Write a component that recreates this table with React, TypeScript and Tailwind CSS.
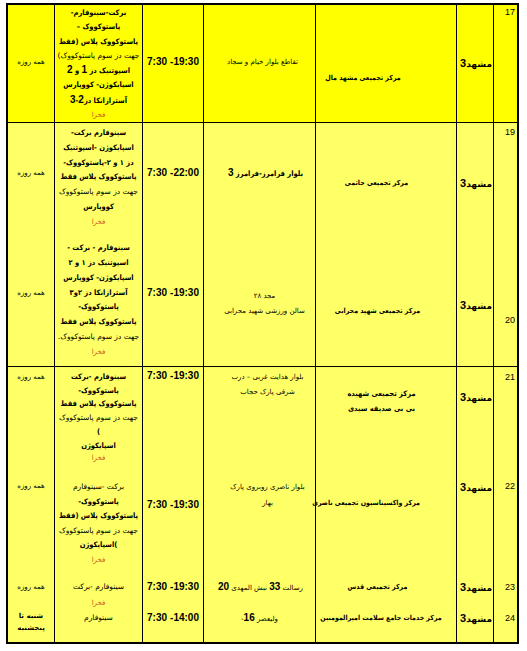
import React from "react";

const GRID =
  "grid grid-cols-[24px_37px_141px_112px_61px_88px_46px] font-['DejaVu_Sans',sans-serif] text-black";
const B = "border-l border-black";
const BD = "font-['DejaVu_Sans_Condensed','DejaVu_Sans',sans-serif] font-bold";
const LAT = "font-['Liberation_Sans',sans-serif] font-bold text-[10px]";

function Num({ n, pt }: { n: string; pt: string }) {
  return (
    <div className={`${B} ${pt} pr-[2px] text-right font-['Liberation_Sans',sans-serif] text-[9px] leading-[14px]`}>
      {n}
    </div>
  );
}

function City({ pt }: { pt: string }) {
  return (
    <div className={`${B} ${pt} pr-[1px] text-right text-[9px] font-bold leading-[14px] whitespace-nowrap`}>
      مشهد<span className="font-['Liberation_Sans',sans-serif] text-[11px]">3</span>
    </div>
  );
}

function Time({ a, b, pt }: { a: string; b: string; pt: string }) {
  return (
    <div className={`${B} ${pt} leading-[14px]`}>
      <div dir="ltr" className="flex justify-center gap-[3px] font-['Liberation_Sans',sans-serif] text-[10px] font-bold">
        <span>{a}</span>
        <span>{b}</span>
      </div>
    </div>
  );
}

function Orange() {
  return <div className="text-[#c8561a] text-[7px]">فخرا</div>;
}

function Days({ pt, children }: { pt: string; children: React.ReactNode }) {
  return <div className={`${pt} text-center text-[7px] leading-[14px]`}>{children}</div>;
}

export default function App() {
  return (
    <div className="min-h-[651px] w-[527px] bg-white pt-[3px]">
      <div dir="rtl" className="ml-[6px] w-[513px] border-2 border-black">
        {/* Row 17 */}
        <div className={`${GRID} grid-rows-[117px] bg-[#ffff00]`}>
          <Num n="17" pt="pt-0" />
          <City pt="pt-[51px]" />
          <div className={`${B} pt-[66px] pr-[46px] text-center text-[7px] leading-[14px] whitespace-nowrap ${BD}`}>مرکز تجمیعی مشهد مال</div>
          <div className={`${B} pt-[50px] pl-[6px] text-center text-[7px] leading-[14px] whitespace-nowrap`}>تقاطع بلوار خیام و سجاد</div>
          <Time a="7:30" b="-19:30" pt="pt-[50px]" />
          <div className={`${B} pt-[1px] text-center text-[7.5px] leading-[14.3px] whitespace-nowrap`}>
            <div className={BD}>برکت-سینوفارم-</div>
            <div className={BD}>پاستوکووک –</div>
            <div className={BD}>پاستوکووک پلاس (فقط</div>
            <div>جهت دز سوم پاستوکووک)</div>
            <div className={BD}>
              اسپوتنیک دز <span className={LAT}>1</span> و <span className={LAT}>2</span>
            </div>
            <div className={BD}>اسپایکوژن- کووپارس</div>
            <div className={BD}>
              آسترازانکا دز<span className={LAT}>2</span>-<span className={LAT}>3</span>
            </div>
            <Orange />
          </div>
          <Days pt="pt-[50px]">همه روزه</Days>
        </div>

        {/* Rows 19 / 20 */}
        <div className={`${GRID} grid-rows-[115px_128px] border-t border-black bg-[#ffff66]`}>
          <Num n="19" pt="pt-[2px]" />
          <City pt="pt-[53px]" />
          <div className={`${B} pt-[53px] pr-[19px] text-center text-[7px] leading-[14px] whitespace-nowrap ${BD}`}>مرکز تجمیعی حاتمی</div>
          <div className={`${B} pt-[43px] pl-[12px] text-center text-[7.5px] leading-[14px] whitespace-nowrap ${BD}`}>
            بلوار فرامرز-فرامرز <span className={LAT}>3</span>
          </div>
          <Time a="7:30" b="-22:00" pt="pt-[43px]" />
          <div className={`${B} pt-[3px] text-center text-[7.5px] leading-[14.8px] whitespace-nowrap`}>
            <div className={BD}>سینوفارم برکت-</div>
            <div className={BD}>اسپایکوژن -اسپوتنیک</div>
            <div className={BD}>دز ۱ و ۲-پاستوکووک-</div>
            <div className={BD}>پاستوکووک پلاس فقط</div>
            <div>جهت دز سوم پاستوکووک</div>
            <div className={BD}>کووپارس</div>
            <Orange />
          </div>
          <Days pt="pt-[43px]">همه روزه</Days>

          <Num n="20" pt="pt-[75px]" />
          <City pt="pt-[60px]" />
          <div className={`${B} pt-[66px] pr-[17px] text-center text-[7px] leading-[14px] whitespace-nowrap ${BD}`}>مرکز تجمیعی شهید محرابی</div>
          <div className={`${B} pt-[51px] pl-[10px] text-center text-[7px] leading-[15px] whitespace-nowrap`}>
            <div>مجد ۲۸</div>
            <div>سالن ورزشی شهید محرابی</div>
          </div>
          <Time a="7:30" b="-19:30" pt="pt-[48px]" />
          <div className={`${B} pt-[3px] text-center text-[7.5px] leading-[14.85px] whitespace-nowrap`}>
            <div className={BD}>سینوفارم - برکت -</div>
            <div className={BD}>اسپوتنیک دز ۱ و ۲</div>
            <div className={BD}>اسپایکوژن- کووپارس</div>
            <div className={BD}>آسترازانکا دز ۲و۳</div>
            <div className={BD}>پاستوکووک-</div>
            <div className={BD}>پاستوکووک پلاس فقط</div>
            <div>جهت دز سوم پاستوکووک.</div>
            <Orange />
          </div>
          <Days pt="pt-[48px]">همه روزه</Days>
        </div>

        {/* Rows 21 - 24 */}
        <div className={`${GRID} grid-rows-[111px_100px_32px_32px] border-t border-black bg-[#ffff66]`}>
          {/* 21 */}
          <Num n="21" pt="pt-[3px]" />
          <City pt="pt-[23px]" />
          <div className={`${B} pt-[19px] pr-[9px] text-center text-[7.5px] leading-[15px] whitespace-nowrap ${BD}`}>
            <div>مرکز تجمیعی شهیده</div>
            <div>بی بی صدیقه سیدی</div>
          </div>
          <div className={`${B} pt-[3px] pl-[16px] text-center text-[7px] leading-[15px] whitespace-nowrap`}>
            <div>بلوار هدایت غربی – درب</div>
            <div>شرقی پارک حجاب</div>
          </div>
          <Time a="7:30" b="-19:30" pt="pt-[2px]" />
          <div className={`${B} pt-[3px] text-center text-[7.5px] leading-[13.7px] whitespace-nowrap`}>
            <div className={BD}>سینوفارم -برکت</div>
            <div className={BD}>پاستوکووک-</div>
            <div className={BD}>پاستوکووک پلاس فقط</div>
            <div>جهت دز سوم پاستوکووک</div>
            <div className={BD}>)</div>
            <div className={BD}>اسپایکوژن</div>
            <Orange />
          </div>
          <Days pt="pt-[3px]">همه روزه</Days>

          {/* 22 */}
          <Num n="22" pt="pt-[1px]" />
          <City pt="pt-[2px]" />
          <div className={`${B} pt-[18px] pr-[36px] text-center text-[7px] leading-[14px] whitespace-nowrap ${BD}`}>
            مرکز واکسیناسیون تجمیعی ناصری
          </div>
          <div className={`${B} pt-[1px] pl-[16px] text-center text-[7px] leading-[16px] whitespace-nowrap`}>
            <div>بلوار ناصری روبروی پارک</div>
            <div>بهار</div>
          </div>
          <Time a="7:30" b="-19:30" pt="pt-[20px]" />
          <div className={`${B} pt-[2px] text-center text-[7.5px] leading-[14.6px] whitespace-nowrap`}>
            <div>برکت -سینوفارم</div>
            <div className={BD}>پاستوکووک-</div>
            <div className={BD}>پاستوکووک پلاس (فقط</div>
            <div>جهت دز سوم پاستوکووک</div>
            <div className={BD}>)اسپایکوژن</div>
            <Orange />
          </div>
          <Days pt="pt-[1px]">همه روزه</Days>

          {/* 23 */}
          <Num n="23" pt="pt-[2px]" />
          <City pt="pt-[2px]" />
          <div className={`${B} pt-[2px] pr-[17px] text-center text-[7px] leading-[14px] whitespace-nowrap ${BD}`}>مرکز تجمیعی قدس</div>
          <div className={`${B} pt-[2px] pl-[2px] text-center text-[7px] leading-[14px] whitespace-nowrap`}>
            رسالت <span className={LAT}>33</span> نبش المهدی <span className={LAT}>20</span>
          </div>
          <Time a="7:30" b="-19:30" pt="pt-[2px]" />
          <div className={`${B} pt-[1px] text-center text-[7.5px] leading-[16px] whitespace-nowrap`}>
            <div>سینوفارم -برکت</div>
            <Orange />
          </div>
          <Days pt="pt-[2px]">همه روزه</Days>

          {/* 24 */}
          <Num n="24" pt="pt-[1px]" />
          <City pt="pt-[1px]" />
          <div className={`${B} pt-[1px] pr-[10px] text-center text-[7px] leading-[14px] whitespace-nowrap ${BD}`}>
            مرکز  خدمات جامع سلامت امیرالمومنین
          </div>
          <div className={`${B} pt-[1px] text-center text-[7px] leading-[14px] whitespace-nowrap`}>
            ولیعصر <span className={LAT}>16</span>-
          </div>
          <Time a="7:30" b="-14:00" pt="pt-[1px]" />
          <div className={`${B} pt-[1px] text-center text-[7.5px] leading-[14px] whitespace-nowrap`}>سینوفارم</div>
          <div className="pt-0 text-center text-[7px] font-bold leading-[12px]">
            <div>شنبه تا</div>
            <div>پنجشنبه</div>
          </div>
        </div>
      </div>
    </div>
  );
}
